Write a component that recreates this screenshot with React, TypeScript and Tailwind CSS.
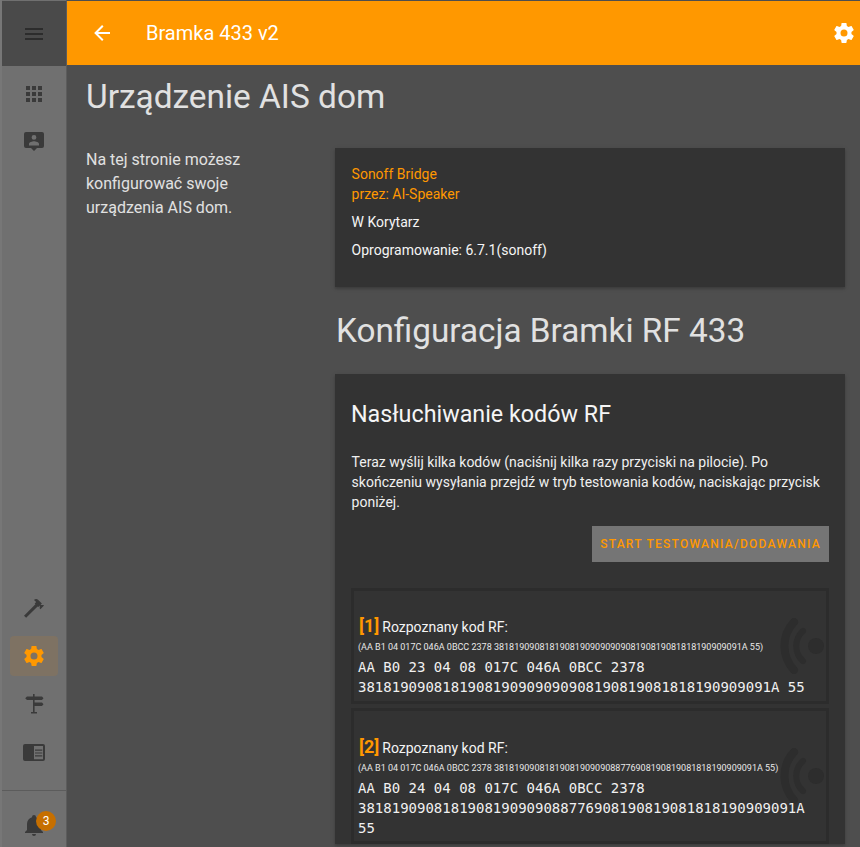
const cog = 'M12,15.5A3.5,3.5 0 0,1 8.5,12A3.5,3.5 0 0,1 12,8.5A3.5,3.5 0 0,1 15.5,12A3.5,3.5 0 0,1 12,15.5M19.43,12.97C19.47,12.65 19.5,12.33 19.5,12C19.5,11.67 19.47,11.34 19.43,11L21.54,9.37C21.73,9.22 21.78,8.95 21.66,8.73L19.66,5.27C19.54,5.05 19.27,4.96 19.05,5.05L16.56,6.05C16.04,5.66 15.5,5.32 14.87,5.07L14.5,2.42C14.46,2.18 14.25,2 14,2H10C9.75,2 9.54,2.18 9.5,2.42L9.13,5.07C8.5,5.32 7.96,5.66 7.44,6.05L4.95,5.05C4.73,4.96 4.46,5.05 4.34,5.27L2.34,8.73C2.21,8.95 2.27,9.22 2.46,9.37L4.57,11C4.53,11.34 4.5,11.67 4.5,12C4.5,12.33 4.53,12.65 4.57,12.97L2.46,14.63C2.27,14.78 2.21,15.05 2.34,15.27L4.34,18.73C4.46,18.95 4.73,19.03 4.95,18.95L7.44,17.94C7.96,18.34 8.5,18.68 9.13,18.93L9.5,21.58C9.54,21.82 9.75,22 10,22H14C14.25,22 14.46,21.82 14.5,21.58L14.87,18.93C15.5,18.67 16.04,18.34 16.56,17.94L19.05,18.95C19.27,19.03 19.54,18.95 19.66,18.73L21.66,15.27C21.78,15.05 21.73,14.78 21.54,14.63L19.43,12.97Z'

function Icon({ d, className }: { d: string; className?: string }) {
  return (
    <svg viewBox="0 0 24 24" className={`w-6 h-6 fill-current ${className ?? ''}`}>
      <path d={d} fillRule="evenodd" />
    </svg>
  )
}

function SideItem({ d, active }: { d: string; active?: boolean }) {
  return (
    <div className="h-12 flex items-center justify-center">
      <div className={`w-12 h-10 rounded flex items-center justify-center ${active ? 'bg-[#7e7263] text-[#ff9800]' : 'text-[#3a3a3a]'}`}>
        <Icon d={d} />
      </div>
    </div>
  )
}

function Sidebar() {
  return (
    <aside className="w-[67px] shrink-0 h-full flex flex-col bg-[#707070] border-l-2 border-l-[#777777] border-r border-r-[#5c5c5c]">
      <div className="h-[65px] shrink-0 mt-px bg-[#4a4a4a] flex items-center justify-center text-[#2c2c2c]">
        <Icon d="M3,6H21V8H3V6M3,11H21V13H3V11M3,16H21V18H3V16Z" />
      </div>
      <div className="pt-1">
        <SideItem d="M16 20h4v-4h-4m0-2h4v-4h-4m-6-2h4V4h-4m6 4h4V4h-4m-6 10h4v-4h-4m-6 4h4v-4H4m0 10h4v-4H4m6 4h4v-4h-4M4 8h4V4H4v4Z" />
        <SideItem d="M4 2h16a2 2 0 0 1 2 2v12a2 2 0 0 1-2 2h-5l-3 3-3-3H4a2 2 0 0 1-2-2V4a2 2 0 0 1 2-2ZM12 5a2.4 2.4 0 1 0 0 4.800a2.400 2.400 0 0 0 0-4.800ZM7 15.500h10V14c0-1.800-3.300-2.700-5-2.700S7 12.200 7 14v1.500Z" />
      </div>
      <div className="flex-1" />
      <SideItem d="M2 19.630L13.430 8.200L12.720 7.500L14.140 6.070L12 3.890C13.200 2.700 15.090 2.700 16.270 3.890L19.870 7.500L18.450 8.910H21.290L22 9.620L18.450 13.180L17.740 12.470V9.620L16.270 11.090L15.560 10.380L4.130 21.810L2 19.630Z" />
      <SideItem active d={cog} />
      <SideItem d="M11 2h1.600v2.500H20l1.500 1.800L20 8h-7.400v2.500H20l1.500 1.800L20 14h-7.400v6H15v1.500H9V20h2v-12H5L3.200 6.300 5 4.500h6V2Z" />
      <SideItem d="M3 4h18a2 2 0 0 1 2 2v13a2 2 0 0 1-2 2H3a2 2 0 0 1-2-2V6a2 2 0 0 1 2-2ZM12 6v13.300h9V6h-9ZM13 9.500h7.300v1.200H13V9.500ZM13 12.400h7.300v1.200H13v-1.200ZM13 15.300h7.300v1.200H13v-1.200Z" />
      <div className="h-px bg-[#5c5c5c] mt-3.5" />
      <div className="relative h-[56px] flex items-center justify-center pt-3 text-[#3a3a3a]">
        <Icon d="M21,19V20H3V19L5,17V11C5,7.900 7.030,5.170 10,4.290C10,4.190 10,4.100 10,4A2,2 0 0,1 12,2A2,2 0 0,1 14,4C14,4.100 14,4.190 14,4.290C16.970,5.170 19,7.900 19,11V17L21,19M14,21A2,2 0 0,1 12,23A2,2 0 0,1 10,21" />
        <span className="absolute left-[34px] top-[20px] w-5 h-5 rounded-full bg-[#c66f00] text-white text-xs flex items-center justify-center">3</span>
      </div>
    </aside>
  )
}

function RfMark() {
  return (
    <svg viewBox="0 0 50 56" className="absolute right-[2px] top-1/2 -translate-y-1/2 w-[50px] h-[56px] text-[#2d2d2d]" fill="none" stroke="currentColor" strokeLinecap="round">
      <circle cx="42" cy="28" r="8" fill="currentColor" stroke="none" />
      <path d="M29 13A20 20 0 0 0 29 43" strokeWidth="6" />
      <path d="M20 4A35 35 0 0 0 20 52" strokeWidth="8" />
    </svg>
  )
}

function CodeItem({ n, raw, lines, tall }: { n: number; raw: string; lines: string[]; tall?: boolean }) {
  return (
    <div className={`relative border-[3px] border-[#2c2c2c] bg-[#333333] pl-1 ${tall ? 'h-[136px] pt-[22px]' : 'h-[116px] pt-[21px]'}`}>
      <RfMark />
      <div className="relative h-[24px] flex items-baseline text-sm text-[#f5f5f5]">
        <span className="text-lg font-bold text-[#ff9800] ml-px mr-[3px]">[{n}]</span>
        Rozpoznany kod RF:
      </div>
      <div className="relative text-[9px] leading-[14px] mt-[4px] text-[#e8e8e8] whitespace-nowrap">{raw}</div>
      <div className="relative font-['DejaVu_Sans_Mono',monospace] text-sm leading-5 mt-[3px] text-[#f0f0f0]">
        {lines.map(l => <div key={l}>{l}</div>)}
      </div>
    </div>
  )
}

export default function App() {
  return (
    <div className="w-[860px] h-[847px] overflow-hidden flex bg-[#4e4e4e] font-['Roboto',sans-serif]">
      <Sidebar />
      <main className="flex-1 min-w-0 h-full flex flex-col">
        <header className="h-[64px] shrink-0 mt-px bg-[#ff9800] text-white flex items-center pl-[23px] pr-[4px]">
          <Icon d="M20,11V13H8L13.500,18.500L12.080,19.920L4.160,12L12.080,4.080L13.500,5.500L8,11H20Z" />
          <span className="ml-[32px] text-xl">Bramka 433 v2</span>
          <div className="flex-1" />
          <Icon d={cog} />
        </header>
        <div className="pl-[19px] pr-[15px]">
          <h1 className="text-[33.4px] leading-10 text-[#e1e1e1] mt-[12px]">Urządzenie AIS dom</h1>
          <div className="flex mt-[31px]">
            <p className="w-[249px] shrink-0 pr-[64px] text-base leading-6 text-[#e1e1e1]">
              Na tej stronie możesz konfigurować swoje urządzenia AIS dom.
            </p>
            <div className="flex-1 min-w-0">
              <section className="bg-[#333333] h-[139px] pl-[16.6px] pr-[17px] pt-[16px] text-sm shadow-[0_2px_2px_rgba(0,0,0,0.14),0_1px_5px_rgba(0,0,0,0.12)]">
                <div className="text-[#ff9800] leading-5">Sonoff Bridge</div>
                <div className="text-[#ff9800] leading-5">przez: AI-Speaker</div>
                <div className="text-[#f5f5f5] leading-5 mt-2">W Korytarz</div>
                <div className="text-[#f5f5f5] leading-5 mt-2">Oprogramowanie: 6.7.1(sonoff)</div>
              </section>
              <h2 className="text-[33.3px] leading-10 text-[#e1e1e1] mt-[24px] ml-px">Konfiguracja Bramki RF 433</h2>
              <section className="mt-[23px] bg-[#333333] px-[16px] pt-[24px] shadow-[0_2px_2px_rgba(0,0,0,0.14),0_1px_5px_rgba(0,0,0,0.12)]">
                <h3 className="text-[23.3px] leading-8 text-[#f5f5f5]">Nasłuchiwanie kodów RF</h3>
                <p className="text-sm leading-5 text-[#f0f0f0] mt-[22px] ml-[0.6px]">
                  Teraz wyślij kilka kodów (naciśnij kilka razy przyciski na pilocie). Po skończeniu wysyłania przejdź w tryb testowania kodów, naciskając przycisk poniżej.
                </p>
                <div className="flex justify-end mt-[14px]">
                  <button className="w-[237px] h-9 bg-[#757575] text-[#ff9800] text-xs font-medium tracking-[1.25px]">
                    START TESTOWANIA/DODAWANIA
                  </button>
                </div>
                <div className="mt-[26px] flex flex-col gap-[4px]">
                  <CodeItem
                    n={1}
                    raw="(AA B1 04 017C 046A 0BCC 2378 3818190908181908190909090908190819081818190909091A 55)"
                    lines={['AA B0 23 04 08 017C 046A 0BCC 2378', '3818190908181908190909090908190819081818190909091A 55']}
                  />
                  <CodeItem
                    tall
                    n={2}
                    raw="(AA B1 04 017C 046A 0BCC 2378 3818190908181908190909088776908190819081818190909091A 55)"
                    lines={['AA B0 24 04 08 017C 046A 0BCC 2378', '3818190908181908190909088776908190819081818190909091A', '55']}
                  />
                </div>
              </section>
            </div>
          </div>
        </div>
      </main>
    </div>
  )
}
